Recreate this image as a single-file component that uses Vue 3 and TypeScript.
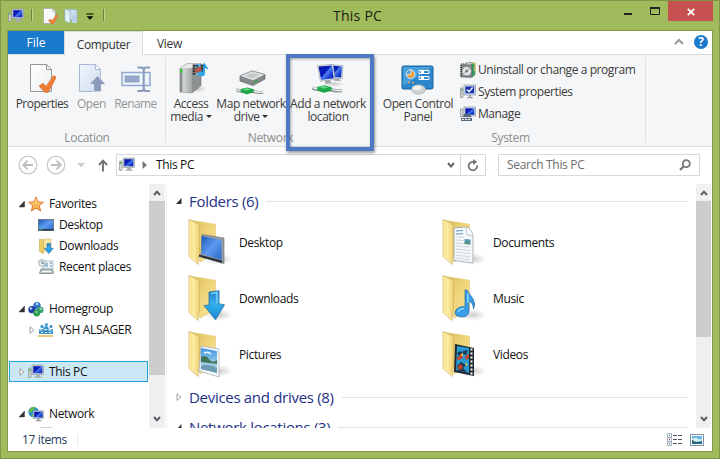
<script setup lang="ts">
interface TreeNode {
  label: string
  icon: string
  level: number
  state: 'open' | 'closed' | 'none'
  selected?: boolean
  gap?: boolean
}
interface Folder {
  label: string
  icon: string
}

const tree: TreeNode[] = [
  { label: 'Favorites', icon: 'star', level: 0, state: 'open' },
  { label: 'Desktop', icon: 'desktop', level: 1, state: 'none' },
  { label: 'Downloads', icon: 'downloads', level: 1, state: 'none' },
  { label: 'Recent places', icon: 'recent', level: 1, state: 'none' },
  { label: 'Homegroup', icon: 'homegroup', level: 0, state: 'open', gap: true },
  { label: 'YSH ALSAGER', icon: 'user', level: 1, state: 'closed' },
  { label: 'This PC', icon: 'pc', level: 0, state: 'closed', selected: true, gap: true },
  { label: 'Network', icon: 'network', level: 0, state: 'open', gap: true },
  { label: '', icon: 'device', level: 1, state: 'none' },
]

const folders: Folder[] = [
  { label: 'Desktop', icon: 'o-desktop' },
  { label: 'Documents', icon: 'o-docs' },
  { label: 'Downloads', icon: 'o-down' },
  { label: 'Music', icon: 'o-music' },
  { label: 'Pictures', icon: 'o-pics' },
  { label: 'Videos', icon: 'o-video' },
]
</script>

<template>
  <div class="window">
    <svg class="defs" width="0" height="0" aria-hidden="true">
      <defs>
        <linearGradient id="gScreen" x1="0" y1="0" x2="1" y2=".8">
          <stop offset="0" stop-color="#0816a0" /><stop offset=".5" stop-color="#0a1fc0" /><stop offset=".56" stop-color="#4f7cec" /><stop offset=".8" stop-color="#1d45d6" /><stop offset="1" stop-color="#0d25b4" />
        </linearGradient>
        <linearGradient id="gPage" x1="0" y1="0" x2="1" y2="1">
          <stop offset="0" stop-color="#fff" /><stop offset="1" stop-color="#eceef0" />
        </linearGradient>
        <linearGradient id="gPale" x1="0" y1="0" x2="1" y2="1">
          <stop offset="0" stop-color="#f3f7fd" /><stop offset="1" stop-color="#ccd9ee" />
        </linearGradient>
        <linearGradient id="gMetal" x1="0" y1="0" x2="1" y2="0">
          <stop offset="0" stop-color="#a9acad" /><stop offset=".35" stop-color="#d0d2d3" /><stop offset="1" stop-color="#a2a5a6" />
        </linearGradient>
        <linearGradient id="gFront" x1="0" y1="0" x2="1" y2="0">
          <stop offset="0" stop-color="#f3da7e" /><stop offset=".45" stop-color="#fdeba2" /><stop offset="1" stop-color="#edcf70" />
        </linearGradient>
        <linearGradient id="gBack" x1="0" y1="0" x2="1" y2="1">
          <stop offset="0" stop-color="#dcbd5c" /><stop offset=".5" stop-color="#f0d67c" /><stop offset="1" stop-color="#f9e79c" />
        </linearGradient>
        <linearGradient id="gBlue" x1="0" y1="0" x2="0" y2="1">
          <stop offset="0" stop-color="#2c7fc8" /><stop offset=".45" stop-color="#34b0ee" /><stop offset="1" stop-color="#1587d2" />
        </linearGradient>
        <linearGradient id="gDesk" x1="0" y1="0" x2="1" y2="1">
          <stop offset="0" stop-color="#1c58b8" /><stop offset=".5" stop-color="#5d9bf0" /><stop offset="1" stop-color="#2863c5" />
        </linearGradient>
        <linearGradient id="gSky" x1="0" y1="0" x2="0" y2="1">
          <stop offset="0" stop-color="#3d94dc" /><stop offset="1" stop-color="#d6eef8" />
        </linearGradient>
        <linearGradient id="gStar" x1="0" y1="0" x2="0" y2="1">
          <stop offset="0" stop-color="#ffe48a" /><stop offset="1" stop-color="#f39a35" />
        </linearGradient>
        <radialGradient id="gShade"><stop offset="0" stop-color="#999" stop-opacity=".5" /><stop offset="1" stop-color="#aaa" stop-opacity="0" /></radialGradient>
      </defs>
      <symbol id="pc" viewBox="0 0 16 16">
        <rect x=".5" y="4" width="2.6" height="9.5" rx=".5" fill="#d3d6d5" stroke="#7b8183" stroke-width=".6" />
        <rect x="1.1" y="5" width="1.3" height="2" fill="#48b83a" />
        <rect x="4" y="1" width="11.5" height="9.5" rx=".5" fill="#c4cbd4" stroke="#8b939f" stroke-width=".6" />
        <rect x="5.3" y="2.2" width="9" height="7" fill="url(#gScreen)" />
        <path d="M8.5 10.6h3.2l.4 2h1.6v1.2H6.5v-1.2h1.6z" fill="#a6acb4" />
      </symbol>
      <symbol id="check-page" viewBox="0 0 28 32">
        <path d="M2.5 2.5h16l5 5v22h-21z" fill="url(#gPage)" stroke="#94979a" />
        <path d="M18.5 2.5v5h5z" fill="#fff" stroke="#94979a" />
        <path d="M11 24l4-2.8 3 3.3L25.5 13.5l3 1.6-8.4 15.5-3.2-.2z" fill="#ee7d32" stroke="#c9662a" stroke-width=".5" />
      </symbol>
      <symbol id="open" viewBox="0 0 28 32">
        <path d="M1.5 2.5h16l5 5v22h-21z" fill="url(#gPale)" stroke="#a7b8d5" />
        <path d="M17.5 2.5v5h5z" fill="#fff" stroke="#a7b8d5" />
        <path d="M19.5 13.5l8.5 9h-4.5v7.2h-8v-7.2H11z" fill="#8a9bbb" stroke="#fff" stroke-width=".7" />
      </symbol>
      <symbol id="rename" viewBox="0 0 30 28">
        <rect x="1" y="8.5" width="28" height="13" fill="#edf3fc" stroke="#91a9d0" stroke-width="1.5" />
        <rect x="4" y="12" width="14" height="6" fill="#96a9c8" stroke="#7d93b9" stroke-width=".7" />
        <path d="M16.5 3.5h4q2 0 2.2 2.5.4-2.5 2.5-2.5H29M22.7 5v20M16.5 27h4q2 0 2.2-2.5.4 2.5 2.5 2.5H29" fill="none" stroke="#879ab9" stroke-width="2" />
      </symbol>
      <symbol id="media" viewBox="0 0 34 34">
        <ellipse cx="24" cy="28" rx="9" ry="4" fill="url(#gShade)" />
        <path d="M6 7L13 2.5h14v22L18 32 6 31z" fill="#8e9192" stroke="#6f7375" stroke-width=".6" />
        <path d="M6 7h12v25L6 31z" fill="url(#gMetal)" /><path d="M7 8v23" stroke="#7f8283" stroke-width="1.6" />
        <path d="M6 7l7-4.5h14L18 7z" fill="#e5e6e6" />
        <path d="M7.3 8v4" stroke="#2fc92f" stroke-width="2" />
        <rect x="19" y="3" width="10" height="11" fill="#4d6268" /><rect x="21" y="3" width="6" height="11" fill="#5db4dc" />
        <path d="M20 3v11M28 3v11" stroke="#1a1a1a" stroke-width="2.4" /><path d="M20 3v11M28 3v11" stroke="#fff" stroke-width="1" stroke-dasharray="1.2 1.4" />
        <path d="M21 7.6l6-2.6v7.6l-4-1-2 1z" fill="#b55649" /><path d="M21 4h3v3z" fill="#23333d" />
        <path d="M30 2.5q.6 3 3.6 5.2M30 2.5v10" fill="none" stroke="#2096db" stroke-width="1.8" /><ellipse cx="27.6" cy="12.8" rx="3.2" ry="2.5" fill="#2da5e7" />
      </symbol>
      <symbol id="cable" viewBox="0 0 30 10">
        <path d="M0 4q5 3 11 .8M17 5q4 3 12 2" fill="none" stroke="#8b9495" stroke-width="3.2" /><path d="M0 3.6q5 3 11 .8M17 4.6q4 3 12 2" fill="none" stroke="#eef1f1" stroke-width="1.4" />
        <path d="M5 3.4l7-1.7 7 2v3.5L11.5 9 5 7z" fill="#1fa649" /><path d="M6.5 3.5l5.5-1 4 1.4-5 1.3z" fill="#63d885" />
      </symbol>
      <symbol id="drive" viewBox="0 0 30 28">
        <path d="M4 8L16 3l13 3.5V11L17 17.5 4 13z" fill="#85898b" stroke="#5f6365" stroke-width=".7" />
        <path d="M4 8L16 3l13 3.5-12 6z" fill="#e6e7e7" stroke="#808486" stroke-width=".5" /><path d="M8.5 8L16.3 4.8l8 2-7.5 3.8z" fill="#c6c9ca" /><path d="M18.3 13.8l3-1.5" stroke="#21ae39" stroke-width="1.4" />
        <use href="#cable" x="0" y="17.5" width="28" height="10" />
      </symbol>
      <symbol id="netloc" viewBox="0 0 32 32">
        <ellipse cx="22" cy="22" rx="10" ry="3" fill="url(#gShade)" />
        <path d="M17 2.6L31 3.6l-1 13-12-1z" fill="#dfe3e7" stroke="#96a0aa" stroke-width=".6" /><path d="M18 3.6l12 .9-.9 11-10-.8z" fill="url(#gScreen)" />
        <path d="M23 16l4 .4 2 2.6-7-.3z" fill="#a2a8ae" />
        <path d="M5.5 3.6l15.5-1.3 2 15-14.5 2z" fill="#e6eaee" stroke="#8f99a5" stroke-width=".6" /><path d="M6.5 4.6l13.5-1.2 1.8 12.9-12.6 1.7z" fill="url(#gScreen)" />
        <path d="M13 18.6l5-.7 1.4 3-6 1z" fill="#a0a7ad" />
        <use href="#cable" x="0" y="21.5" width="31" height="10.3" />
      </symbol>
      <symbol id="control" viewBox="0 0 34 30">
        <rect x="1" y="1" width="31" height="23" rx="1.5" fill="#2b86cc" stroke="#16639c" /><path d="M2 2h29L2 21z" fill="#57ade2" opacity=".65" />
        <circle cx="9.8" cy="9.3" r="4.2" fill="none" stroke="#fff" stroke-width=".9" /><circle cx="9.8" cy="9.3" r="3.4" fill="#f59a2f" /><path d="M9.8 9.3V4.5a4.8 4.8 0 0 0-4.8 4.8z" fill="#4797d0" stroke="#fff" stroke-width=".7" />
        <path d="M18 5.5h10v3H18zM18 11.5h10v3H18z" fill="#338fc8" stroke="#fff" /><path d="M20 7h3M20 13h3" stroke="#fff" stroke-width="2" />
        <path d="M7 17.5h2M11 17.5h2" stroke="#f8a04d" stroke-width="1.7" />
        <ellipse cx="17.5" cy="24.5" rx="7" ry="4.7" fill="#cfd2d3" stroke="#9ba0a2" stroke-width=".6" /><ellipse cx="16" cy="23" rx="4.5" ry="2.4" fill="#f0f1f1" />
      </symbol>
      <symbol id="uninstall" viewBox="0 0 16 16">
        <path d="M5 2l3-1.5L15 1v12l-3 2H5z" fill="#d1d9c8" stroke="#65706b" stroke-width=".6" /><path d="M11 2l4-1v12l-3 2z" fill="#39a76a" /><path d="M13 1h2v8" fill="none" stroke="#f2c94f" />
        <rect x="1" y="3" width="11" height="12" fill="#8a9190" stroke="#51585a" stroke-width=".7" /><circle cx="6.7" cy="9.2" r="4.6" fill="#e3e8e9" stroke="#70777a" stroke-width=".5" /><circle cx="6.7" cy="9.2" r="1.4" fill="#727a7b" /><path d="M7 8l4-3M6 10l-4 3" stroke="#9da7ab" /><path d="M1 3v12M1 2h6" stroke="#151515" stroke-dasharray="1 1" />
      </symbol>
      <symbol id="sysprop" viewBox="0 0 16 16">
        <rect x=".5" y="4" width="2.5" height="9.5" fill="#d2d6d3" stroke="#7b8183" stroke-width=".6" /><path d="M1.7 5v2" stroke="#32b832" />
        <rect x="4" y="1" width="11.5" height="10" fill="#e3e7ee" stroke="#8690a3" stroke-width=".7" /><rect x="5.4" y="2.4" width="8.8" height="7" fill="#1735af" /><path d="M7 5.8l2 2 3.7-4.3" fill="none" stroke="#fff" stroke-width="1.4" /><path d="M9 11h2v2h2v1.2H7V13h2z" fill="#9ca1a6" />
      </symbol>
      <symbol id="manage" viewBox="0 0 16 16">
        <rect x=".5" y="3" width="2.5" height="8" fill="#d2d6d3" stroke="#7b8183" stroke-width=".6" /><rect x="4" y="1" width="11.5" height="9" fill="#dfe4ec" stroke="#8690a3" stroke-width=".7" /><rect x="5.3" y="2.3" width="9" height="6.5" fill="url(#gScreen)" />
        <path d="M4 8h6l2 4v3H1v-4h2z" fill="#59677a" /><path d="M1 11h11v1.2H1z" fill="#d5dce4" /><path d="M2 13.5h9" stroke="#eee" stroke-dasharray="2 1" />
      </symbol>
      <symbol id="star" viewBox="0 0 16 16"><path d="M8 .8l2.1 5 5.3.4-4.1 3.5 1.4 5.4L8 12.2l-4.7 2.9 1.4-5.4L.6 6.2l5.3-.4z" fill="url(#gStar)" stroke="#d0753c" stroke-width=".9" /></symbol>
      <symbol id="desktop" viewBox="0 0 16 16"><rect x=".4" y="2.4" width="15.2" height="11.2" fill="url(#gDesk)" stroke="#667078" stroke-width=".8" /><path d="M.5 12.8h15" stroke="#28394d" stroke-width="1.5" /><path d="M1 12.8h3" stroke="#48bd66" /></symbol>
      <symbol id="downloads" viewBox="0 0 16 16"><path d="M5 1h8v12H5z" fill="#f7e4a0" stroke="#d5b869" stroke-width=".6" /><path d="M1.5 1l4 1v13.5l-4-2z" fill="#edcb65" stroke="#c9a950" stroke-width=".6" /><path d="M9 5.5h3.6v4.8h2.8L10.8 15.6 6.3 10.3H9z" fill="url(#gBlue)" stroke="#2a77b2" stroke-width=".6" /></symbol>
      <symbol id="recent" viewBox="0 0 16 16"><rect x="5.5" y="2" width="9.5" height="10" fill="#eef4f8" stroke="#97a5ad" stroke-width=".7" /><path d="M7 7h3M12 4h2M7 5h3M12 7h2" stroke="#4489c4" stroke-width="1.2" /><path d="M3 10h11l1.5 4.5H1.5z" fill="#bfc7cb" stroke="#758085" stroke-width=".8" /><path d="M4 12.5h9" stroke="#f9f9f9" /><circle cx="4" cy="4" r="3.4" fill="#e2eef2" stroke="#8fa1aa" stroke-width=".8" /><path d="M4 2v2.3h1.8" fill="none" stroke="#45555d" stroke-width=".8" /></symbol>
      <symbol id="homegroup" viewBox="0 0 16 16"><circle cx="9" cy="4.6" r="3.7" fill="#3273c5" /><circle cx="3.9" cy="8.7" r="3.6" fill="#1f3fa8" /><circle cx="12.2" cy="9" r="3.3" fill="#37a568" /><circle cx="8.7" cy="12" r="3.4" fill="#2b9a4d" /><g fill="#c8eaf7" opacity=".85"><circle cx="9" cy="3" r="1.3" /><circle cx="3" cy="7.5" r="1.3" /><circle cx="12.7" cy="8" r="1.1" /><circle cx="8.5" cy="11" r="1.1" /></g></symbol>
      <symbol id="user" viewBox="0 0 16 16"><path d="M1 7h4l1-2 2-1 2 1 1 2h4v5H1z" fill="#3b94c8" /><circle cx="4" cy="4.5" r="1.6" fill="#328fc7" /><circle cx="8.5" cy="2.8" r="1.8" fill="#55a8d5" /><circle cx="13" cy="4.5" r="1.5" fill="#3189c2" /><path d="M1.5 8h3M6 7.5h3M10 8h4M3 10.5h2M7 10.5h2M11 10.5h2" stroke="#e4f5fc" stroke-width="1.1" /><path d="M0 14h15" stroke="#e2b13c" stroke-width="1.4" /></symbol>
      <symbol id="network" viewBox="0 0 16 16"><circle cx="5.5" cy="6" r="5.2" fill="#2e8bd3" /><path d="M1.5 3l3-2 3 .3-1 2-2 1L3 7 1 6zM4 8l3 .5-1.6 2.5-1.8-1z" fill="#62bf43" /><rect x="5.2" y="4.8" width="10.4" height="7.7" fill="#c7ced5" stroke="#8993a0" stroke-width=".5" /><rect x="6.2" y="5.8" width="8.4" height="5.6" fill="url(#gScreen)" /><path d="M9.5 12.5h2v1.8h2v1H7.5v-1h2z" fill="#8a9198" /></symbol>
      <symbol id="device" viewBox="0 0 16 16"><path d="M2 1h12v9H2z" fill="#eee" stroke="#aaa" /></symbol>
      <symbol id="folder" viewBox="0 0 46 48">
        <ellipse cx="31" cy="40" rx="14" ry="6" fill="url(#gShade)" />
        <path d="M4 1.5L27.5 5.3V35L12 43z" fill="url(#gBack)" stroke="#e0c878" stroke-width=".6" />
        <path d="M1 1.2Q1 0 2.5.8L10 5q1.5.8 1.5 2.7v26.8q0 2-1.2 3v8L2 38.6Q1 37.7 1 36z" fill="url(#gFront)" stroke="#d0b35c" stroke-width=".7" />
        <path d="M2 2v35l8 7" fill="none" stroke="#fff4c5" stroke-width=".8" />
      </symbol>
      <symbol id="o-desktop" viewBox="0 0 46 48"><path d="M14 15.5L36 19v25.5L11 37.5l2-2.5z" fill="#999ca0" stroke="#606970" stroke-width=".6" /><path d="M13.5 17L33.5 21v19.5L13.5 35z" fill="url(#gDesk)" /><path d="M11 37.5v-2l23 6v2.5z" fill="#26313c" /></symbol>
      <symbol id="o-docs" viewBox="0 0 46 48"><path d="M12 9l12-1q5 1 7 8v28l-19-2.5z" fill="#f5f8fb" stroke="#9ba5b0" stroke-width=".8" /><path d="M24 8l1 8 6 .5" fill="#fff" stroke="#a6b0ba" stroke-width=".7" /><path d="M14 12l7-.5M14 15l7-.3" stroke="#5a92c2" /><path d="M14 18l8 .5M14 21l8 .5M14 24l8 .6M14 27l14 1M14 30l14 1.5M14 33l14 1.6M14 36l14 2M14 39l14 2" stroke="#c3cdd8" stroke-width=".8" /><path d="M22.5 20l6 .6v5l-6-.5z" fill="#5295bd" /><path d="M22.5 24l3-2 3 3.6-6-.5z" fill="#5d956d" /></symbol>
      <symbol id="o-down" viewBox="0 0 46 48"><path d="M21 17l10-1.2v13l5.5 1-9 15L16 30.5l5-.4z" fill="url(#gBlue)" stroke="#236ea4" stroke-width=".8" /><path d="M23 18.5l6-1v11" fill="none" stroke="#76d2fb" stroke-width="1.5" /></symbol>
      <symbol id="o-music" viewBox="0 0 46 48"><path d="M25 15q2 3 6 9 3 5 .5 10-.2-6-4.5-8v11q-1 5-7 5t-7-4q0-4 5-6 3-1 5 0V15z" fill="#359ee6" stroke="#286aa5" stroke-width=".7" /><path d="M16 37q2-4 6-3M26 18v10" fill="none" stroke="#8bd4fb" stroke-width="1.5" /></symbol>
      <symbol id="o-pics" viewBox="0 0 46 48"><path d="M13 15l18 3v28L11 40z" fill="#f5f8fb" stroke="#a0a9b1" stroke-width=".7" /><path d="M13 17l16 3v22L12.5 38z" fill="url(#gSky)" /><path d="M13 26q5-3 8 2t8 1v4l-16-1z" fill="#42755a" /><path d="M13 31q8 1 16 2v9l-16-4z" fill="#9fcbe2" /><path d="M13 35q8-3 16 2v5l-16-4z" fill="#6a9bb1" /><path d="M16 22q4-2 7 1" stroke="#eaf7fc" stroke-width="1.5" fill="none" /></symbol>
      <symbol id="o-video" viewBox="0 0 46 48"><path d="M13 13l19 4v28l-20-4z" fill="#202a30" /><path d="M15 15l12 2v25l-13-3z" fill="#299ad2" /><path d="M15 22l4-2 2 3-4 2zM21 20l5-1-2 5-3-1zM15 35l4-4 5 3-3 3 4 4-8-1z" fill="#1d3a50" /><path d="M14 28l5-5 2 3-3 3zM23 25l4-2v4l-3 2zM15 37l3-4 3 2-2 4z" fill="#c6442e" /><path d="M18 24l3-2v3zM23 32l3 1-2 2z" fill="#f3c63a" /><path d="M29.5 17.5v26" stroke="#fff" stroke-width="2" stroke-dasharray="2 2" /></symbol>
    </svg>

    <header class="titlebar">
      <svg class="i16 app"><use href="#pc" /></svg>
      <i class="tsep s1"></i>
      <svg class="qcheck"><use href="#check-page" /></svg>
      <svg class="qopen" viewBox="0 0 14 16"><path d="M1 2h5v11H1zM5 1l8 1v10H5z" fill="#c9dff0" stroke="#8fb0c6" stroke-width=".7" /><path d="M1 1l5 2v12l-5-2z" fill="#e4f0f8" stroke="#9dbad0" stroke-width=".6" /><path d="M8 7h5v8H8z" fill="#b5d0e8" /></svg>
      <svg class="qdrop" viewBox="0 0 8 8"><path d="M.5 1h7" stroke="#000" /><path d="M.5 3.2h7L4 6.8z" fill="#000" /></svg>
      <i class="tsep s2"></i>
      <h1>This PC</h1>
      <svg class="min" viewBox="0 0 8 8"><path d="M0 4h8" stroke="#222" stroke-width="2" /></svg>
      <svg class="max" viewBox="0 0 10 8"><path d="M.5 0v7.5h9V0" fill="none" stroke="#222" /><path d="M0 1h10" stroke="#222" stroke-width="2" /></svg>
      <div class="close"><svg viewBox="0 0 8 8"><path d="M.8.8l6.4 6.4M7.2.8L.8 7.2" stroke="#fff" stroke-width="1.8" /></svg></div>
    </header>

    <main class="client">
      <nav class="tabs">
        <div class="tab file"><span>File</span></div>
        <div class="tab current"><span>Computer</span></div>
        <div class="tab view"><span>View</span></div>
        <svg class="collapse" viewBox="0 0 10 8"><path d="M1 6l4-4 4 4" fill="none" stroke="#999" stroke-width="2" /></svg>
        <div class="help">?</div>
      </nav>

      <section class="ribbon">
        <div class="group location">
          <div class="tools">
            <div class="tool t-prop"><svg class="big"><use href="#check-page" /></svg><span>Properties</span></div>
            <div class="tool t-open off"><svg class="big"><use href="#open" /></svg><span>Open</span></div>
            <div class="tool t-ren off"><svg class="big"><use href="#rename" /></svg><span>Rename</span></div>
          </div>
          <p>Location</p>
        </div>
        <div class="group net">
          <div class="tools">
            <div class="tool t-media"><svg class="big"><use href="#media" /></svg><span>Access</span><span>media <b></b></span></div>
            <div class="tool t-map"><svg class="big"><use href="#drive" /></svg><span>Map network</span><span>drive <b></b></span></div>
            <div class="tool t-add"><svg class="big"><use href="#netloc" /></svg><span>Add a network</span><span>location</span></div>
          </div>
          <p>Network</p>
          <div class="highlight"></div>
        </div>
        <div class="group system">
          <div class="tools">
            <div class="tool t-cp"><svg class="big"><use href="#control" /></svg><span>Open Control</span><span>Panel</span></div>
            <ul>
              <li><svg class="i16"><use href="#uninstall" /></svg><span>Uninstall or change a program</span></li>
              <li><svg class="i16"><use href="#sysprop" /></svg><span>System properties</span></li>
              <li><svg class="i16"><use href="#manage" /></svg><span>Manage</span></li>
            </ul>
          </div>
          <p>System</p>
        </div>
      </section>

      <section class="address">
        <svg class="round" viewBox="0 0 20 20"><circle cx="10" cy="10" r="8.8" fill="none" stroke="#c9c9c9" stroke-width="1.3" /><path d="M15 10H5.5M9.5 5.7L5.3 10l4.2 4.3" fill="none" stroke="#bebebe" stroke-width="1.8" /></svg>
        <svg class="round fwd" viewBox="0 0 20 20"><circle cx="10" cy="10" r="8.8" fill="none" stroke="#c9c9c9" stroke-width="1.3" /><path d="M5 10h9.5M10.5 5.7l4.2 4.3-4.2 4.3" fill="none" stroke="#bebebe" stroke-width="1.8" /></svg>
        <svg class="hist" viewBox="0 0 8 5"><path d="M0 0h8L4 4.5z" fill="#ccc" /></svg>
        <svg class="up" viewBox="0 0 10 13"><path d="M5 12.5V2M1 6l4-4.3L9 6" fill="none" stroke="#707070" stroke-width="1.9" /></svg>
        <div class="path">
          <svg class="i16"><use href="#pc" /></svg>
          <svg class="crumb" viewBox="0 0 5 8"><path d="M.5 0v8L5 4z" fill="#777" /></svg>
          <span>This PC</span>
          <svg class="chev" viewBox="0 0 8 6"><path d="M1 1l3 3.5L7 1" fill="none" stroke="#666" stroke-width="2" /></svg>
          <div class="refresh"><svg viewBox="0 0 12 12"><path d="M7.3 2.9H5.6A4.2 4.2 0 1 0 10 6.4" fill="none" stroke="#717171" stroke-width="1.7" /><path d="M6.2 0L10 3 6.2 6z" fill="#717171" /></svg></div>
        </div>
        <div class="search"><span>Search This PC</span><svg viewBox="0 0 12 12"><circle cx="7.3" cy="4.7" r="3.5" fill="none" stroke="#777" stroke-width="1.8" /><path d="M4.8 7.2L1 11" stroke="#777" stroke-width="2.2" /></svg></div>
      </section>

      <section class="body">
        <aside class="tree">
          <div v-for="(n, i) in tree" :key="i" class="node" :class="{ child: n.level, selected: n.selected, gap: n.gap }">
            <svg class="exp" viewBox="0 0 6 8"><path v-if="n.state === 'open'" d="M5.5 1v6H0z" fill="#333" stroke="#222" stroke-width=".4" /><path v-if="n.state === 'closed'" d="M1 .8v6.6L4.9 4.1z" fill="#fff" stroke="#888" stroke-width=".8" /></svg>
            <svg class="i16"><use :href="'#' + n.icon" /></svg>
            <span>{{ n.label }}</span>
          </div>
        </aside>
        <div class="scroll side"><svg viewBox="0 0 8 6"><path d="M1 5l3-3.3L7 5" /></svg><i></i><svg viewBox="0 0 8 6"><path d="M1 1l3 3.3L7 1" /></svg></div>
        <div class="pane">
          <div class="heading first"><svg class="exp" viewBox="0 0 6 8"><path d="M5.5 1v6H0z" fill="#333" /></svg><h2>Folders (6)</h2><hr></div>
          <div class="grid">
            <div v-for="f in folders" :key="f.label" class="item">
              <svg class="folder" viewBox="0 0 46 48"><use href="#folder" width="46" height="48" /><use :href="'#' + f.icon" width="46" height="48" /></svg>
              <span>{{ f.label }}</span>
            </div>
          </div>
          <div class="heading second"><svg class="exp" viewBox="0 0 6 8"><path d="M1 .8v6.6L4.9 4.1z" fill="#fff" stroke="#888" stroke-width=".8" /></svg><h2>Devices and drives (8)</h2><hr></div>
          <div class="heading third"><svg class="exp" viewBox="0 0 6 8"><path d="M5.5 1v6H0z" fill="#333" /></svg><h2>Network locations (3)</h2><hr></div>
        </div>
        <div class="scroll wide"><svg viewBox="0 0 8 6"><path d="M1 5l3-3.3L7 5" /></svg><i></i><svg viewBox="0 0 8 6"><path d="M1 1l3 3.3L7 1" /></svg></div>
      </section>

      <footer>
        <span>17 items</span><i></i>
        <svg class="v1" viewBox="0 0 15 13"><g fill="#fff" stroke="#8c99ad" stroke-width=".8"><path d="M.5.5h4v3.7h-4zM.5 4.7h4v3.7h-4zM.5 8.9h4v3.7h-4z" /></g><path d="M2 2.3h1M2 10.7h1" stroke="#456" /><path d="M2 6.5h1" stroke="#c33" /><path d="M6 2.5h4M11 2.5h4M6 6.5h4M11 6.5h4M6 10.5h4M11 10.5h4" stroke="#505a66" /></svg>
        <svg class="v2" viewBox="0 0 14 12"><rect x=".5" y=".5" width="13" height="11" fill="#fff" stroke="#8291a8" /><path d="M2 2h10v8H2z" fill="#65b6e4" /><path d="M2 5l4-1.5 3 2 3-1V8H2z" fill="#d9f0ee" /><path d="M2 6l4 2 6-1v3H2z" fill="#23678a" /><path d="M2 6l3 2H2z" fill="#2c7550" /></svg>
      </footer>
    </main>
  </div>
</template>

<style>
html, body { margin: 0; overflow: hidden; }
</style>
<style scoped>
* { box-sizing: border-box; }
.window { width: 720px; height: 459px; background: #a0bb5b; border: 1px solid #7f9548; display: flex; flex-direction: column; font-family: "Open Sans", "Noto Sans", sans-serif; font-size: 12px; letter-spacing: -.35px; color: #111; }
.defs { position: absolute; }
svg { display: block; flex: none; }
span { white-space: nowrap; }
.i16 { width: 16px; height: 16px; }
.titlebar { height: 29px; display: flex; align-items: flex-start; padding-left: 7px; }
.app { margin-top: 7px; }
.tsep { width: 2px; height: 12px; margin-top: 8px; border-left: 1px solid #708144; border-right: 1px solid #c4d592; }
.s1 { margin-left: 7px; }
.qcheck { width: 16px; height: 18px; margin: 6px 0 0 9px; }
.qopen { width: 14px; height: 16px; margin: 7px 0 0 6px; }
.qdrop { width: 8px; height: 8px; margin: 12px 0 0 8px; }
.s2 { margin-left: 9px; }
h1 { margin: 0; font-size: 14px; line-height: 19px; font-weight: 400; letter-spacing: .25px; padding-top: 5px; width: 50px; margin-left: 228px; white-space: nowrap; color: #1c2213; }
.min { width: 8px; height: 8px; margin: 9px 0 0 241px; }
.max { width: 10px; height: 8px; margin: 6px 0 0 18px; }
.close { width: 45px; height: 20px; margin-left: 8px; background: #c75050; display: flex; align-items: center; justify-content: center; }
.close svg { width: 8px; height: 8px; margin-top: 1px; }
.client { width: 706px; height: 422px; margin-left: 6px; border: 1px solid #84994c; background: #fff; display: flex; flex-direction: column; }
.tabs { height: 24px; flex: none; display: flex; border-bottom: 1px solid #dadbdc; letter-spacing: -.3px; }
.tab { display: flex; align-items: center; justify-content: center; height: 24px; color: #333; }
.file { width: 56px; background: #1979ca; color: #fff; height: 23px; letter-spacing: 0; }
.current { width: 79px; background: #f5f6f7; border: solid #dadbdc; border-width: 1px 1px 0; padding-top: 1px; letter-spacing: -.4px; }
.view { width: 53px; padding-top: 1px; }
.collapse { width: 10px; height: 8px; margin: 7px 0 0 478px; }
.help { width: 14px; height: 14px; border-radius: 50%; background: #1979ca; color: #fff; font-size: 12px; line-height: 14px; font-weight: 700; text-align: center; margin: 4px 0 0 10px; letter-spacing: 0; }
.ribbon { height: 92px; flex: none; display: flex; background: #f5f6f7; border-bottom: 1px solid #dadbdc; color: #3b3b3b; letter-spacing: -.42px; }
.group { position: relative; height: 91px; display: flex; flex-direction: column; }
.group::after { content: ""; position: absolute; right: 0; top: 2px; bottom: 3px; border-right: 1px solid #e0e1e2; }
.location { width: 158px; }
.net { width: 209px; }
.system { width: 271px; }
.tools { display: flex; height: 75px; }
.group p { margin: 0; text-align: center; line-height: 15px; color: #8d8d8d; letter-spacing: -.3px; }
.tool { display: flex; flex-direction: column; align-items: center; line-height: 13px; padding-top: 7px; }
.tool .big { margin-bottom: 1px; height: 34px; }
.off { color: #969696; }
.t-prop { width: 68px; letter-spacing: -.55px; } .t-prop .big { width: 28px; height: 32px; margin-bottom: 3px; }
.t-open { width: 31px; } .t-open .big { width: 28px; height: 32px; margin-bottom: 3px; }
.t-ren { width: 57px; letter-spacing: -.6px; } .t-ren .big { width: 30px; height: 28px; margin: 2px 0 5px; }
.t-media { width: 50px; } .t-media .big { width: 34px; margin-top: -1px; margin-bottom: 2px; }
.t-map { width: 70px; } .t-map .big { width: 30px; height: 28px; margin: 6px 0 1px; }
.t-add { width: 84px; } .t-add .big { width: 32px; height: 32px; margin-bottom: 3px; }
.t-cp { width: 86px; } .t-cp .big { width: 34px; height: 30px; margin: 3px 0 2px; }
b { display: inline-block; border: 3px solid transparent; border-top-color: #333; border-bottom: 0; vertical-align: 3px; }
ul { list-style: none; margin: 0 0 0 -1px; padding: 4px 0 0; }
li { height: 22px; display: flex; align-items: center; gap: 2px; }
li span { margin-top: -1px; }
.highlight { position: absolute; left: 120px; top: -1px; width: 88px; height: 97px; border: 4px solid #4e78c4; box-shadow: 1px 2px 3px rgba(60,60,70,.5), inset 1px 1px 3px rgba(60,60,70,.45); z-index: 2; }
.address { height: 37px; flex: none; display: flex; padding-top: 7px; padding-left: 10px; }
.round { width: 20px; height: 20px; margin-top: 1px; }
.fwd { margin-left: 8px; }
.hist { width: 8px; height: 5px; margin: 9px 0 0 11px; }
.up { width: 10px; height: 13px; margin: 5px 0 0 13px; }
.path { width: 370px; height: 22px; margin-left: 8px; border: 1px solid #d9d9d9; display: flex; align-items: center; padding-left: 2px; }
.crumb { width: 5px; height: 8px; margin-left: 7px; }
.path span { margin: -2px 0 0 9px; width: 50px; }
.chev { width: 8px; height: 6px; margin-left: auto; margin-right: 5px; }
.refresh { height: 20px; width: 25px; border-left: 1px solid #d9d9d9; display: flex; align-items: center; justify-content: center; }
.refresh svg { width: 12px; height: 12px; }
.search { width: 202px; height: 22px; margin-left: 12px; border: 1px solid #d9d9d9; display: flex; align-items: center; justify-content: space-between; padding: 0 8px; color: #6d6d6d; letter-spacing: -.3px; }
.search span { margin-top: -2px; }
.search svg { width: 12px; height: 12px; }
.body { height: 244px; flex: none; display: flex; overflow: hidden; }
.tree { width: 141px; padding: 9px 1px 0; overflow: hidden; }
.node { height: 21px; width: 139px; display: flex; align-items: center; padding-left: 9px; border: 1px solid transparent; }
.node.gap { margin-top: 21px; }
.node.child { padding-left: 19px; }
.node.child .i16 { margin-left: 3px; }
.node.selected { background: #cbe8f6; border-color: #26a0da; }
.exp { width: 6px; height: 8px; }
.node .i16 { margin: 0 5px 0 3px; }
.scroll { display: flex; flex-direction: column; align-items: center; background: #f0f0f0; width: 16px; flex: none; justify-content: space-between; padding: 6px 0; }
.scroll svg { width: 8px; height: 6px; }
.scroll path { fill: none; stroke: #555c63; stroke-width: 2; }
.scroll i { width: 100%; background: #cdcdcd; }
.side i { height: 175px; margin-bottom: 41px; margin-top: 5px; }
.wide i { height: 137px; margin-bottom: 79px; margin-top: 5px; }
.wide { width: 15px; margin-right: 1px; }
.pane { flex: 1; border-left: 1px solid #f0f0f0; margin-left: 1px; overflow: hidden; padding-left: 9px; }
.heading { display: flex; align-items: center; height: 20px; width: 512px; }
.heading h2 { font-size: 15px; letter-spacing: -.3px; font-weight: 400; margin: -1px 0 0 7px; line-height: 20px; color: #1e3287; white-space: nowrap; flex: none; }
.heading hr { flex: 1; border: 0; border-top: 1px solid #e2e2e2; margin: 0 0 0 8px; }
.first { margin-top: 7px; }
.second { margin-top: 5px; }
.third { margin-top: 10px; }
.grid { display: grid; grid-template-columns: 254px 254px; grid-auto-rows: 56px; margin: 3px 0 0 12px; }
.item { display: flex; align-items: center; gap: 5px; }
.folder { width: 46px; height: 48px; margin-top: 2px; }
footer { height: 23px; display: flex; align-items: center; padding-left: 14px; color: #273a59; }
footer i { height: 12px; border-left: 1px solid #e8e8e8; margin-left: 10px; }
.v1 { width: 15px; height: 13px; margin-left: auto; }
.v2 { width: 14px; height: 12px; margin: 0 8px; }
</style>
